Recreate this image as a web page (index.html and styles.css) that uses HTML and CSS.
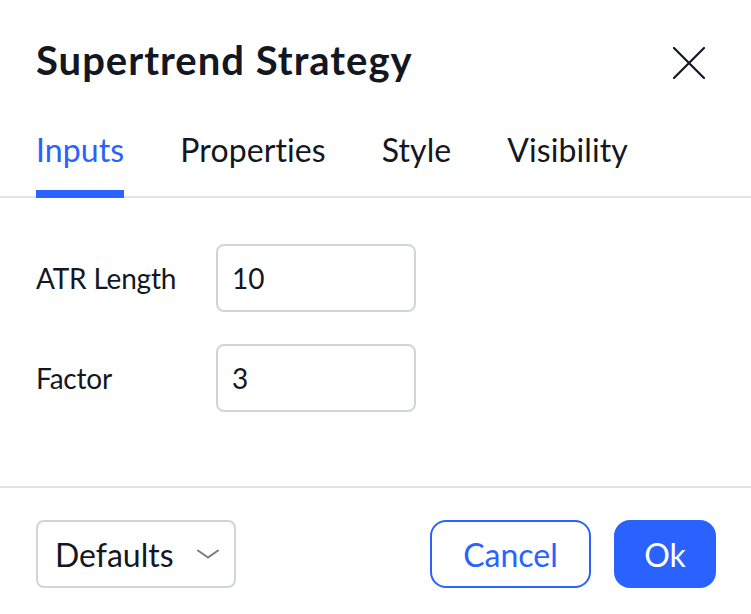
FILE: index.html
```html
<!DOCTYPE html>
<html lang="en">
<head>
<meta charset="utf-8">
<title>Supertrend Strategy</title>
<link rel="stylesheet" href="styles.css">
</head>
<body>
<div class="dialog">
  <div class="header">
    <h1 class="title">Supertrend Strategy</h1>
    <button class="close" aria-label="Close">
      <svg width="32" height="32" viewBox="0 0 32 32"><path d="M1 1L31 31M31 1L1 31" stroke="#131722" stroke-width="2.2" fill="none" stroke-linecap="round"/></svg>
    </button>
  </div>
  <div class="tabs">
    <div class="tab active">Inputs</div>
    <div class="tab">Properties</div>
    <div class="tab">Style</div>
    <div class="tab">Visibility</div>
  </div>
  <div class="content">
    <div class="row">
      <div class="label">ATR Length</div>
      <div class="input">10</div>
    </div>
    <div class="row">
      <div class="label">Factor</div>
      <div class="input">3</div>
    </div>
  </div>
  <div class="footer">
    <div class="select">
      <span>Defaults</span>
      <svg width="22" height="10" viewBox="0 0 22 10"><path d="M1 1.5L11 8.5L21 1.5" stroke="#787b86" stroke-width="2" fill="none" stroke-linecap="round" stroke-linejoin="round"/></svg>
    </div>
    <div class="actions">
      <button class="btn btn-secondary">Cancel</button>
      <button class="btn btn-primary">Ok</button>
    </div>
  </div>
</div>
</body>
</html>
```

FILE: styles.css
```css
* { box-sizing: border-box; }
html, body { margin: 0; padding: 0; background: #fff; }
body {
  font-family: Lato, "Liberation Sans", sans-serif;
  color: #131722;
}
.dialog {
  width: 751px;
  height: 614px;
  display: flex;
  flex-direction: column;
  background: #fff;
}
.header {
  display: flex;
  justify-content: space-between;
  align-items: flex-start;
  padding: 36px 46px 0 36px;
}
.title {
  margin: 0;
  font-size: 40px;
  line-height: 48px;
  font-weight: 700;
  letter-spacing: 1px;
}
.close {
  margin-top: 11px;
  width: 32px;
  height: 32px;
  padding: 0;
  border: 0;
  background: none;
  display: flex;
}
.tabs {
  display: flex;
  gap: 56px;
  padding: 0 36px;
  margin-top: 46px;
  border-bottom: 2px solid #e0e3eb;
}
.tab {
  position: relative;
  font-size: 32px;
  line-height: 40px;
  padding-bottom: 26px;
  color: #131722;
  letter-spacing: 0.1px;
}
.tab.active { color: #2962ff; }
.tab.active::after {
  content: "";
  position: absolute;
  left: 0;
  right: 0;
  bottom: -2px;
  height: 8px;
  background: #2962ff;
}
.content {
  display: flex;
  flex-direction: column;
  gap: 32px;
  padding: 46px 36px 0 36px;
  flex: 1;
}
.row {
  display: flex;
  align-items: center;
}
.label {
  width: 180px;
  font-size: 28px;
  line-height: 36px;
  letter-spacing: -0.2px;
}
.input {
  width: 200px;
  height: 68px;
  border: 2px solid #d1d4dc;
  border-radius: 8px;
  padding-left: 14px;
  font-size: 28px;
  line-height: 64px;
}
.footer {
  border-top: 2px solid #e0e3eb;
  display: flex;
  justify-content: space-between;
  align-items: center;
  padding: 32px 35px 26px 36px;
}
.select {
  width: 200px;
  height: 68px;
  border: 2px solid #d1d4dc;
  border-radius: 8px;
  display: flex;
  align-items: center;
  justify-content: space-between;
  padding: 0 15px 0 17px;
  font-size: 32px;
}
.actions {
  display: flex;
  gap: 23px;
}
.btn {
  height: 68px;
  padding: 0;
  border-radius: 16px;
  border: 2px solid #2962ff;
  font-family: Lato, "Liberation Sans", sans-serif;
  font-size: 32px;
}
.btn-secondary { width: 161px; background: #fff; color: #2962ff; }
.btn-primary { width: 102px; background: #2962ff; color: #fff; }
```
